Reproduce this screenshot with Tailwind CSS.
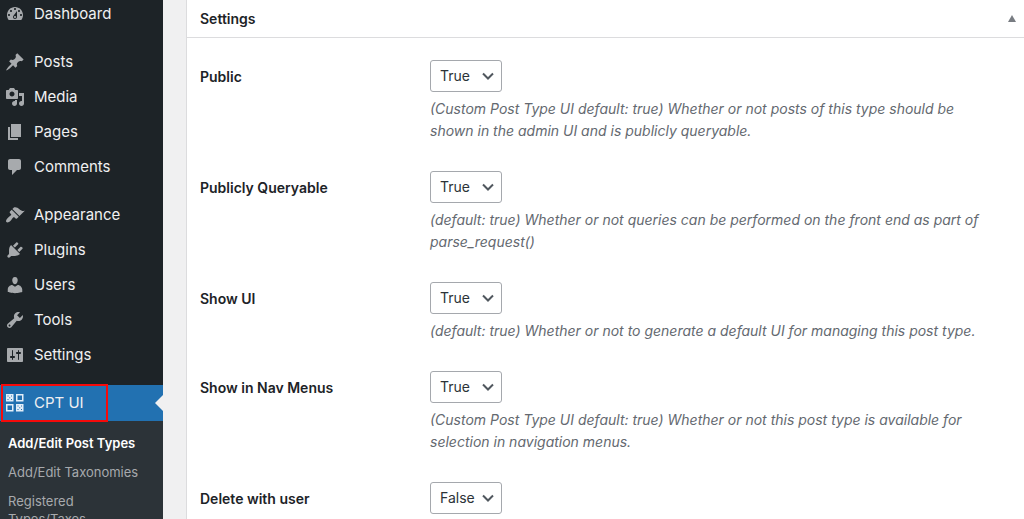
<!DOCTYPE html>
<html lang="en">
<head>
    <meta charset="UTF-8">
    <meta name="viewport" content="width=device-width, initial-scale=1.0">
    <title>CPT UI - Add/Edit Post Types</title>
    <script src="https://cdn.jsdelivr.net/npm/@tailwindcss/browser@4"></script>
</head>
<body class="flex h-screen overflow-hidden bg-[#f0f0f1] font-['Inter','Liberation_Sans',sans-serif] text-sm text-[#1d2327]">

    <!-- Admin menu -->
    <nav class="w-[163px] shrink-0 bg-[#1d2327] text-[15px] text-[#f0f0f1]">
        <ul class="mb-[13px]">
            <li>
                <a href="#" class="flex h-[31px] items-center gap-[9px] pb-1 pl-[5px]">
                    <svg class="size-5 fill-[#a7aaad]" viewBox="0 0 20 20"><path d="M3.76 16h12.48c1.1-1.37 1.76-3.11 1.76-5 0-4.42-3.58-8-8-8s-8 3.58-8 8c0 1.89.66 3.63 1.76 5zM10 4c.55 0 1 .45 1 1s-.45 1-1 1-1-.45-1-1 .45-1 1-1zM6 6c.55 0 1 .45 1 1s-.45 1-1 1-1-.45-1-1 .45-1 1-1zm8 0c.55 0 1 .45 1 1s-.45 1-1 1-1-.45-1-1 .45-1 1-1zm-5.37 5.55L12 7v6c0 1.1-.9 2-2 2s-2-.9-2-2c0-.57.24-1.08.63-1.45zM4 10c.55 0 1 .45 1 1s-.45 1-1 1-1-.45-1-1 .45-1 1-1zm12 0c.55 0 1 .45 1 1s-.45 1-1 1-1-.45-1-1 .45-1 1-1zm-5 3c0-.55-.45-1-1-1s-1 .45-1 1 .45 1 1 1 1-.45 1-1z"/></svg>
                    Dashboard
                </a>
            </li>
        </ul>
        <ul class="mb-[13px]">
            <li>
                <a href="#" class="flex h-[35px] items-center gap-[9px] pl-[5px]">
                    <svg class="size-5 fill-[#a7aaad]" viewBox="0 0 20 20"><path d="M10.44 3.02l1.82-1.82 6.36 6.35-1.83 1.82c-1.05-.68-2.48-.57-3.41.36l-.75.75c-.92.93-1.04 2.35-.35 3.41l-1.83 1.82-2.41-2.41-2.8 2.79c-.42.42-3.38 2.71-3.8 2.29s1.86-3.39 2.28-3.81l2.79-2.79L4.1 9.36l1.83-1.82c1.05.69 2.48.57 3.4-.36l.75-.75c.93-.92 1.05-2.35.36-3.41z"/></svg>
                    Posts
                </a>
            </li>
            <li>
                <a href="#" class="flex h-[35px] items-center gap-[9px] pl-[5px]">
                    <svg class="size-5 fill-[#a7aaad]" viewBox="0 0 20 20"><path d="M13 11V4c0-.55-.45-1-1-1h-1.67L9 1H5L3.67 3H2c-.55 0-1 .45-1 1v7c0 .55.45 1 1 1h10c.55 0 1-.45 1-1zM7 4.5c1.38 0 2.5 1.12 2.5 2.5S8.38 9.5 7 9.5 4.5 8.38 4.5 7 5.62 4.5 7 4.5zM14 6h5v10.5c0 1.38-1.12 2.5-2.5 2.5S14 17.88 14 16.5s1.12-2.5 2.5-2.5c.17 0 .34.02.5.05V9h-3V6zm-4 8.05V13h2v3.5c0 1.38-1.12 2.5-2.5 2.5S7 17.88 7 16.5 8.12 14 9.5 14c.17 0 .34.02.5.05z"/></svg>
                    Media
                </a>
            </li>
            <li>
                <a href="#" class="flex h-[35px] items-center gap-[9px] pl-[5px]">
                    <svg class="size-5 fill-[#a7aaad]" viewBox="0 0 20 20"><path d="M6 15V2h10v13H6zm-1 1h8v2H3V5h2v11z"/></svg>
                    Pages
                </a>
            </li>
            <li>
                <a href="#" class="flex h-[35px] items-center gap-[9px] pl-[5px]">
                    <svg class="size-5 fill-[#a7aaad]" viewBox="0 0 20 20"><path d="M5 2h9c1.1 0 2 .9 2 2v7c0 1.1-.9 2-2 2h-2l-5 5v-5H5c-1.1 0-2-.9-2-2V4c0-1.1.9-2 2-2z"/></svg>
                    Comments
                </a>
            </li>
        </ul>
        <ul class="mb-[13px]">
            <li>
                <a href="#" class="flex h-[35px] items-center gap-[9px] pl-[5px]">
                    <svg class="size-5 fill-[#a7aaad]" viewBox="0 0 20 20"><path d="M14.48 11.06L7.41 3.99l1.5-1.5c.5-.56 2.3-.47 3.51.32 1.21.8 1.43 1.28 2.91 2.1 1.18.64 2.45 1.26 4.45.85zm-.71.71L6.7 4.7 4.93 6.47c-.39.39-.39 1.02 0 1.41l1.06 1.06c.39.39.39 1.03 0 1.42-.6.6-1.43 1.11-2.21 1.69-.35.26-.7.53-1.01.84C1.43 14.23.4 16.08 1.4 17.07c.99 1 2.84-.03 4.18-1.36.31-.31.58-.66.85-1.02.57-.78 1.08-1.61 1.69-2.21.39-.39 1.02-.39 1.41 0l1.06 1.06c.39.39 1.02.39 1.41 0z"/></svg>
                    Appearance
                </a>
            </li>
            <li>
                <a href="#" class="flex h-[35px] items-center gap-[9px] pl-[5px]">
                    <svg class="size-5 fill-[#a7aaad]" viewBox="0 0 20 20"><path d="M13.11 4.36L9.87 7.6 8 5.73l3.24-3.24c.35-.34 1.05-.2 1.56.32.52.51.66 1.21.31 1.55zm-8 1.77l.91-1.12 9.01 9.01-1.19.84c-.71.71-2.63 1.16-3.82 1.16H6.14L4.9 17.26c-.59.59-1.54.59-2.12 0-.59-.58-.59-1.53 0-2.12l1.24-1.24v-3.88c0-1.13.4-3.19 1.09-3.89zm7.26 3.97l3.24-3.24c.34-.35 1.04-.21 1.55.31.52.51.66 1.21.31 1.55l-3.24 3.25z"/></svg>
                    Plugins
                </a>
            </li>
            <li>
                <a href="#" class="flex h-[35px] items-center gap-[9px] pl-[5px]">
                    <svg class="size-5 fill-[#a7aaad]" viewBox="0 0 20 20"><path d="M10 9.25c-2.27 0-2.73-3.44-2.73-3.44C7 4.02 7.82 2 9.97 2c2.16 0 2.98 2.02 2.71 3.81 0 0-.41 3.44-2.68 3.44zm0 2.57L12.72 10c2.39 0 4.52 2.33 4.52 4.53v2.49s-3.65 1.13-7.24 1.13c-3.65 0-7.24-1.13-7.24-1.13v-2.49c0-2.25 1.94-4.48 4.47-4.48z"/></svg>
                    Users
                </a>
            </li>
            <li>
                <a href="#" class="flex h-[35px] items-center gap-[9px] pl-[5px]">
                    <svg class="size-5 fill-[#a7aaad]" viewBox="0 0 20 20"><path d="M16.68 9.77c-1.34 1.34-3.3 1.67-4.95.99l-5.41 6.52c-.99.99-2.59.99-3.58 0s-.99-2.59 0-3.57l6.52-5.42c-.68-1.65-.35-3.61.99-4.95 1.28-1.28 3.12-1.62 4.72-1.06l-2.89 2.89 2.82 2.82 2.86-2.87c.53 1.58.18 3.39-1.08 4.65zM3.81 16.21c.4.39 1.04.39 1.43 0 .4-.4.4-1.04 0-1.43-.39-.4-1.03-.4-1.43 0-.39.39-.39 1.03 0 1.43z"/></svg>
                    Tools
                </a>
            </li>
            <li>
                <a href="#" class="flex h-[35px] items-center gap-[9px] pl-[5px]">
                    <svg class="size-5 fill-[#a7aaad]" viewBox="0 0 20 20"><path d="M18 16V4c0-.55-.45-1-1-1H3c-.55 0-1 .45-1 1v12c0 .55.45 1 1 1h14c.55 0 1-.45 1-1zM8 11h1c.55 0 1 .45 1 1s-.45 1-1 1H8v1.5c0 .28-.22.5-.5.5s-.5-.22-.5-.5V13H6c-.55 0-1-.45-1-1s.45-1 1-1h1V5.5c0-.28.22-.5.5-.5s.5.22.5.5V11zm5-2h-1c-.55 0-1-.45-1-1s.45-1 1-1h1V5.5c0-.28.22-.5.5-.5s.5.22.5.5V7h1c.55 0 1 .45 1 1s-.45 1-1 1h-1v5.5c0 .28-.22.5-.5.5s-.5-.22-.5-.5V9z"/></svg>
                    Settings
                </a>
            </li>
        </ul>

        <!-- Current item with its submenu -->
        <div class="relative">
            <a href="#" class="flex h-9 items-center gap-[9px] bg-[#2271b1] pl-[5px]">
                <svg class="size-5" viewBox="0 0 20 20" fill="none" stroke="#e3eef8" stroke-width="1.5">
                    <path d="M11.75 1.75h6v6h-6zM1.75 11.75h6v6h-6z"/>
                    <path fill="#e3eef8" stroke="none" d="M1 1h7.500v7.500H1zM11 11h7.500v7.500H11z"/>
                    <path stroke="#2271b1" stroke-width="1" d="M2.500 3h1M6 3h1M4.250 4.750h1M2.500 6.500h1M6 6.500h1M12.500 13h1M16 13h1M14.250 14.750h1M12.500 16.500h1M16 16.500h1"/>
                </svg>
                CPT UI
            </a>
            <span class="absolute top-[10px] right-0 border-y-8 border-r-8 border-y-transparent border-r-[#f0f0f1]"></span>
            <!-- red marker round the item -->
            <span class="absolute -top-px left-px h-[38px] w-[107px] border-2 border-[#f60a0a]"></span>
        </div>
        <ul class="h-full bg-[#2c3338] pt-2 text-[13px] leading-[18px] text-[#a7aaad]">
            <li><a href="#" class="block py-[5px] pl-2 font-semibold text-white">Add/Edit Post Types</a></li>
            <li><a href="#" class="block py-[6px] pl-2">Add/Edit Taxonomies</a></li>
            <li><a href="#" class="block py-[5px] pr-8 pl-2">Registered Types/Taxes</a></li>
        </ul>
    </nav>

    <!-- Settings panel -->
    <main class="min-w-0 flex-1 pl-[23px]">
        <section class="h-full border-l border-[#dcdcde] bg-white">
            <header class="flex h-[38px] items-center justify-between border-b border-[#dcdcde] pr-[6px] pl-[13px]">
                <h2 class="font-semibold">Settings</h2>
                <button type="button" aria-label="Toggle panel: Settings" class="p-0.5">
                    <svg class="h-[7px] w-2 fill-[#787c82]" viewBox="0 0 8 7"><path d="M4 0l4 7H0z"/></svg>
                </button>
            </header>

            <form class="pt-[22px] pl-[13px]">
                <div class="flex pb-[29px]">
                    <label for="public" class="w-[230px] shrink-0 pt-[7px] font-semibold">Public</label>
                    <div class="max-w-[570px]">
                        <div class="relative mb-[6px] h-8 w-[72px]">
                            <select id="public" class="h-8 w-full appearance-none rounded-[3px] border border-[#a5a8ad] bg-white pl-[9px] text-[#2c3338]">
                                <option selected>True</option>
                                <option>False</option>
                            </select>
                            <svg class="pointer-events-none absolute top-[10px] right-2 h-3 w-3" viewBox="0 0 12 12" fill="none" stroke="#50575e" stroke-width="2"><path d="M1 3.500l5 5 5-5"/></svg>
                        </div>
                        <p class="leading-[22px] text-[#646970] italic">(Custom Post Type UI default: true) Whether or not posts of this type should be shown in the admin UI and is publicly queryable.</p>
                    </div>
                </div>
                <div class="flex pb-[29px]">
                    <label for="publicly_queryable" class="w-[230px] shrink-0 pt-[7px] font-semibold">Publicly Queryable</label>
                    <div class="max-w-[570px]">
                        <div class="relative mb-[6px] h-8 w-[72px]">
                            <select id="publicly_queryable" class="h-8 w-full appearance-none rounded-[3px] border border-[#a5a8ad] bg-white pl-[9px] text-[#2c3338]">
                                <option selected>True</option>
                                <option>False</option>
                            </select>
                            <svg class="pointer-events-none absolute top-[10px] right-2 h-3 w-3" viewBox="0 0 12 12" fill="none" stroke="#50575e" stroke-width="2"><path d="M1 3.500l5 5 5-5"/></svg>
                        </div>
                        <p class="leading-[22px] text-[#646970] italic">(default: true) Whether or not queries can be performed on the front end as part of parse_request()</p>
                    </div>
                </div>
                <div class="flex pb-[29px]">
                    <label for="show_ui" class="w-[230px] shrink-0 pt-[7px] font-semibold">Show UI</label>
                    <div class="max-w-[570px]">
                        <div class="relative mb-[6px] h-8 w-[72px]">
                            <select id="show_ui" class="h-8 w-full appearance-none rounded-[3px] border border-[#a5a8ad] bg-white pl-[9px] text-[#2c3338]">
                                <option selected>True</option>
                                <option>False</option>
                            </select>
                            <svg class="pointer-events-none absolute top-[10px] right-2 h-3 w-3" viewBox="0 0 12 12" fill="none" stroke="#50575e" stroke-width="2"><path d="M1 3.500l5 5 5-5"/></svg>
                        </div>
                        <p class="leading-[22px] text-[#646970] italic">(default: true) Whether or not to generate a default UI for managing this post type.</p>
                    </div>
                </div>
                <div class="flex pb-[29px]">
                    <label for="show_in_nav_menus" class="w-[230px] shrink-0 pt-[7px] font-semibold">Show in Nav Menus</label>
                    <div class="max-w-[570px]">
                        <div class="relative mb-[6px] h-8 w-[72px]">
                            <select id="show_in_nav_menus" class="h-8 w-full appearance-none rounded-[3px] border border-[#a5a8ad] bg-white pl-[9px] text-[#2c3338]">
                                <option selected>True</option>
                                <option>False</option>
                            </select>
                            <svg class="pointer-events-none absolute top-[10px] right-2 h-3 w-3" viewBox="0 0 12 12" fill="none" stroke="#50575e" stroke-width="2"><path d="M1 3.500l5 5 5-5"/></svg>
                        </div>
                        <p class="leading-[22px] text-[#646970] italic">(Custom Post Type UI default: true) Whether or not this post type is available for selection in navigation menus.</p>
                    </div>
                </div>
                <div class="flex">
                    <label for="delete_with_user" class="w-[230px] shrink-0 pt-[7px] font-semibold">Delete with user</label>
                    <div class="relative h-8 w-[72px]">
                        <select id="delete_with_user" class="h-8 w-full appearance-none rounded-[3px] border border-[#a5a8ad] bg-white pl-[9px] text-[#2c3338]">
                            <option>True</option>
                            <option selected>False</option>
                        </select>
                        <svg class="pointer-events-none absolute top-[10px] right-2 h-3 w-3" viewBox="0 0 12 12" fill="none" stroke="#50575e" stroke-width="2"><path d="M1 3.500l5 5 5-5"/></svg>
                    </div>
                </div>
            </form>
        </section>
    </main>
</body>
</html>
